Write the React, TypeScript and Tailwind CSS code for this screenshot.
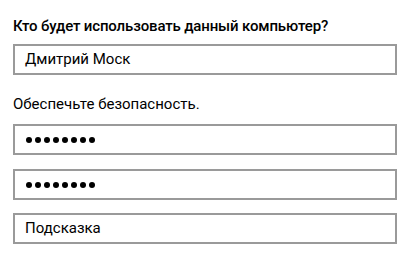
import React from 'react';

const font = { fontFamily: 'Roboto, "Noto Sans", sans-serif' };

function Field({ children, className = '' }: { children: React.ReactNode; className?: string }) {
  return (
    <div className={`h-[31px] w-[384px] border-2 border-[#9a9a9a] bg-white flex items-center pl-[10px] ${className}`}>
      {children}
    </div>
  );
}

function Dots() {
  return (
    <div className="flex items-center gap-[3px] pl-[1px]">
      {Array.from({ length: 8 }).map((_, i) => (
        <span key={i} className="block w-[6px] h-[6px] rounded-full bg-black" />
      ))}
    </div>
  );
}

export default function App() {
  return (
    <div className="w-[414px] h-[258px] bg-white text-black overflow-hidden" style={font}>
      <div className="flex flex-col pl-[13px] pt-[16px]">
        <h2 className="text-[15px] leading-[20px] font-medium tracking-[-0.15px]">
          Кто будет использовать данный компьютер?
        </h2>
        <Field className="mt-[8px]">
          <span className="text-[15px] leading-none">Дмитрий Моск</span>
        </Field>

        <h2 className="mt-[19px] text-[15px] leading-[20px] font-normal">
          Обеспечьте безопасность.
        </h2>
        <Field className="mt-[10px]">
          <Dots />
        </Field>
        <Field className="mt-[14px]">
          <Dots />
        </Field>
        <Field className="mt-[13px]">
          <span className="text-[15px] leading-none">Подсказка</span>
        </Field>
      </div>
    </div>
  );
}
